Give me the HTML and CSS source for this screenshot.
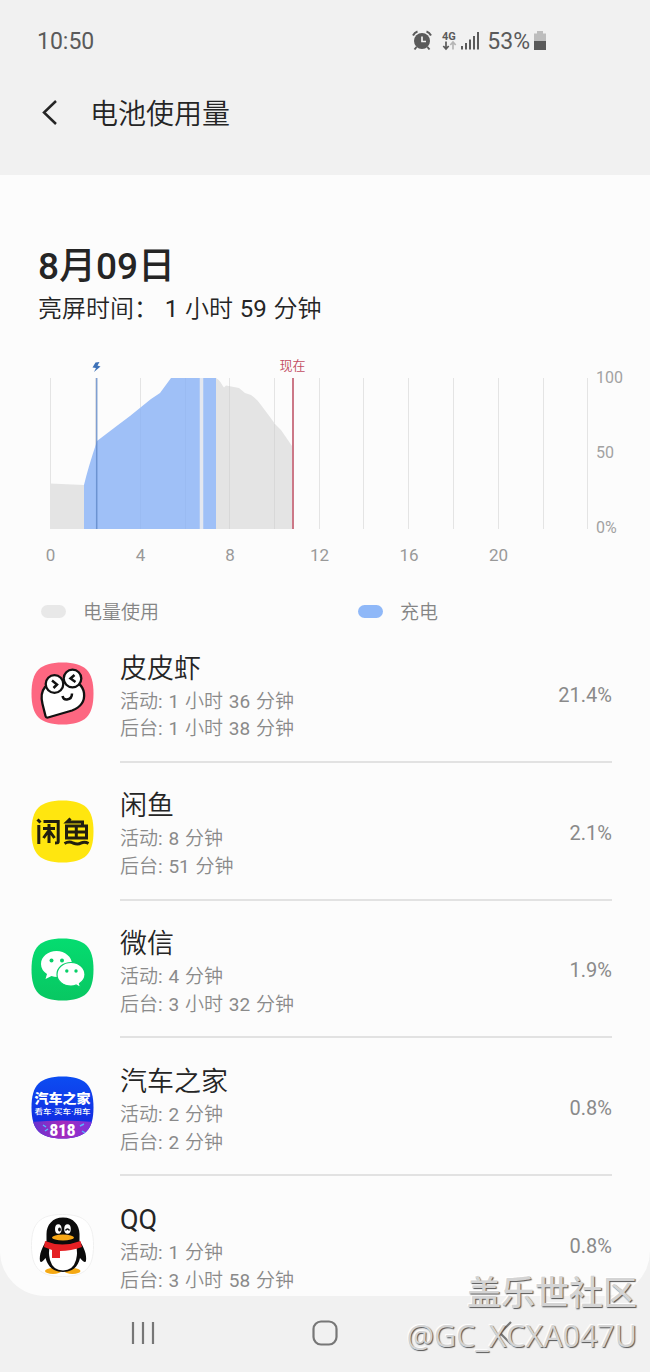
FILE: index.html
```html
<!DOCTYPE html>
<html lang="zh-CN">
<head>
<meta charset="utf-8">
<title>电池使用量</title>
<link rel="stylesheet" href="styles.css">
</head>
<body>
<div class="phone">
	<div class="status">
		<span class="time">10:50</span>
		<svg class="status-icons" width="70" height="26" viewBox="0 0 70 26">
			<!-- alarm -->
			<g fill="none" stroke="#5a5a5a">
				<circle cx="11" cy="13" r="8" fill="#5a5a5a" stroke="none"/>
				<path d="M2 7.5Q3.500 4.500 6.500 3.500M20 7.500Q18.500 4.500 15.500 3.500M5.500 19L3.500 21.500M16.500 19L18.500 21.500" stroke-width="2"/>
				<path d="M11 8.500V13.500H15" stroke="#f1f1f1" stroke-width="1.700"/>
			</g>
			<text x="31" y="11.500" class="net">4G</text>
			<path d="M35 13.500V20M32.300 18L35 21L37.700 18" fill="none" stroke="#5a5a5a" stroke-width="1.700"/>
			<path d="M42 21.500V15M39.300 17L42 14L44.700 17" fill="none" stroke="#b5b5b5" stroke-width="1.700"/>
			<path d="M51 21.500V18M55 21.500V15M59 21.500V11.500M63 21.500V8M67 21.500V4" stroke="#5a5a5a" stroke-width="2"/>
		</svg>
		<span class="level">53%</span>
		<svg width="14" height="22" viewBox="0 0 14 22">
			<path d="M4 1H10V3.500H13V11H1V3.500H4Z" fill="#bdbdbd"/>
			<path d="M1 11H13V20H1Z" fill="#5a5a5a"/>
		</svg>
	</div>

	<div class="header">
		<svg class="back" width="18" height="28" viewBox="0 0 18 28"><path d="M16 2L4 13.500L16 25" fill="none" stroke="#252525" stroke-width="2.500"/></svg>
		<h1>电池使用量</h1>
	</div>

	<div class="card">
		<div class="summary">
			<h2>8月09日</h2>
			<p>亮屏时间： 1 小时 59 分钟</p>
		</div>

		<svg class="chart" width="650" height="230" viewBox="0 350 650 230">
			<path class="grid" d="M50.500 378V529M95.500 378V529M140.500 378V529M185.500 378V529M229.500 378V529M274.500 378V529M319.500 378V529M363.500 378V529M408.500 378V529M453.500 378V529M498.500 378V529M543.500 378V529M587.500 378V529"/>
			<path class="used" d="M50 483.500L84 485V529H50Z"/>
			<path class="used" d="M216 378C220 380 222 385 224 387.500L226 385.500L239 388L245 393L251 395Q257 399 261 405L270 417L275 424L281 430L292 446V529H216Z"/>
			<path class="charge" d="M84 485Q88 468 97 441L118 425L130 416L151 399L160 393L171 378H216V529H84Z"/>
			<path class="gap" d="M201.500 378V529"/>
			<path class="inner" d="M140.500 409V529M185.500 378V529"/>
			<path class="inner-gray" d="M229.500 386V529M274.500 424V529"/>
			<path class="plug" d="M96.700 378V529"/>
			<path class="now" d="M293 378V529"/>
			<path d="M95.500 362.500L92.500 367.500L96 368L94 372L100.500 366.500L97.500 365.500L99.500 362Z" fill="#3e72b8"/>
			<text class="now-text" x="292.500" y="369.500">现在</text>
			<g class="hours">
				<text x="50.500" y="561">0</text>
				<text x="140.500" y="561">4</text>
				<text x="230" y="561">8</text>
				<text x="319.500" y="561">12</text>
				<text x="409" y="561">16</text>
				<text x="498.500" y="561">20</text>
			</g>
			<g class="scale">
				<text x="596" y="383">100</text>
				<text x="596" y="458">50</text>
				<text x="596" y="533">0%</text>
			</g>
		</svg>

		<div class="legend">
			<div class="key"><i></i><span>电量使用</span></div>
			<div class="key charging"><i></i><span>充电</span></div>
		</div>

		<ul class="apps">
			<li>
				<svg class="icon" viewBox="0 0 63 63">
					<path d="M31.500 .5C54 .5 62.500 9 62.500 31.500S54 62.500 31.500 62.500.5 54 .5 31.500 9 .5 31.500 .5Z" fill="#fd6781"/>
					<g fill="#fff" stroke="#111" stroke-width="2.300">
						<path d="M14 25C10 30 10 36 11.500 42L14.500 54Q15 56 17 55.500L41 48.500C50 45 54 39 53 31Q52 25 48 22L30 20Z"/>
						<circle cx="23.500" cy="22" r="8.800"/>
						<circle cx="41.500" cy="16.500" r="8.800"/>
						<path d="M21 18.500L26 22.500L22.500 26M43.500 13L39.500 16.500L44.500 20M31.500 34Q32.500 38 36 37.500Q41 37 41 31.500" fill="none" stroke-width="2.500"/>
					</g>
				</svg>
				<div class="info">
					<div class="text"><h3>皮皮虾</h3><p>活动: 1 小时 36 分钟</p><p>后台: 1 小时 38 分钟</p></div>
					<span class="percent">21.4%</span>
				</div>
			</li>
			<li>
				<svg class="icon" viewBox="0 0 63 63">
					<path d="M31.500 .5C54 .5 62.500 9 62.500 31.500S54 62.500 31.500 62.500.5 54 .5 31.500 9 .5 31.500 .5Z" fill="#ffe60f"/>
					<g fill="none" stroke="#221f10" stroke-width="3">
						<path d="M7.800 25V44M6.500 19.500L9.500 22.500M12.500 21.500H27.200V42Q27.200 43 24 43M12 28.500H24M18 24V43M17.500 31L12.500 38M18.500 31L23.500 38"/>
						<path d="M39.500 18.500L36 22H51.500V26M35.500 26V38H55.500V26H34M36 32H55M45.300 26V38M33.500 43.500Q38 41 42 43Q47 45 50 43Q54 41.500 57.500 43.500"/>
					</g>
				</svg>
				<div class="info">
					<div class="text"><h3>闲鱼</h3><p>活动: 8 分钟</p><p>后台: 51 分钟</p></div>
					<span class="percent">2.1%</span>
				</div>
			</li>
			<li>
				<svg class="icon" viewBox="0 0 63 63">
					<defs><linearGradient id="wx" x1="0" y1="0" x2="0" y2="1"><stop offset="0" stop-color="#05dc70"/><stop offset="1" stop-color="#08c762"/></linearGradient></defs>
					<path d="M31.500 .5C54 .5 62.500 9 62.500 31.500S54 62.500 31.500 62.500.5 54 .5 31.500 9 .5 31.500 .5Z" fill="url(#wx)"/>
					<path d="M25.500 13C17 13 10 18.600 10 26Q10 32 16 36L14.500 41L20.500 38Q23 39 26.500 39C35 39 41 33 41 26S34 13 25.500 13Z" fill="#fff"/>
					<path d="M40 24.500C32 24.500 26 30 26 36.500S32 48 40 48Q43 48 45 47L49.500 49.500L48.500 45.500Q54 42 54 36.500C54 30 48 24.500 40 24.500Z" fill="#fff" stroke="#08cf68" stroke-width="1.200"/>
					<g fill="#08cf68"><circle cx="20.500" cy="22.500" r="2"/><circle cx="31" cy="22.500" r="2"/><circle cx="35.800" cy="33" r="1.700"/><circle cx="45" cy="33" r="1.700"/></g>
				</svg>
				<div class="info">
					<div class="text"><h3>微信</h3><p>活动: 4 分钟</p><p>后台: 3 小时 32 分钟</p></div>
					<span class="percent">1.9%</span>
				</div>
			</li>
			<li>
				<svg class="icon" viewBox="0 0 63 63">
					<defs>
						<linearGradient id="car" x1="0" y1="0" x2="1" y2="0"><stop offset="0" stop-color="#6434d0"/><stop offset=".5" stop-color="#a52bbd"/><stop offset="1" stop-color="#7932dd"/></linearGradient>
						<linearGradient id="blue" x1="0" y1="0" x2="0" y2="1"><stop offset="0" stop-color="#0c4df2"/><stop offset="1" stop-color="#1422db"/></linearGradient>
						<clipPath id="tile"><path d="M31.500 .5C54 .5 62.500 9 62.500 31.500S54 62.500 31.500 62.500.5 54 .5 31.500 9 .5 31.500 .5Z"/></clipPath>
					</defs>
					<g clip-path="url(#tile)">
						<path d="M0 0H63V63H0Z" fill="url(#blue)"/>
						<path d="M0 46Q31 43 63 46V63H0Z" fill="url(#car)"/>
						<path d="M12 49L15 51M14 55L17 53M49 50L53 48M51 55L54 57" stroke="#55b5ff" stroke-width="1.500"/>
					</g>
					<text class="car-name" x="31.500" y="26.500" textLength="56" lengthAdjust="spacingAndGlyphs">汽车之家</text>
					<text class="car-sub" x="31.500" y="37.500" textLength="56" lengthAdjust="spacingAndGlyphs">看车·买车·用车</text>
					<text class="car-num" x="31.500" y="60" textLength="26" lengthAdjust="spacingAndGlyphs">818</text>
				</svg>
				<div class="info">
					<div class="text"><h3>汽车之家</h3><p>活动: 2 分钟</p><p>后台: 2 分钟</p></div>
					<span class="percent">0.8%</span>
				</div>
			</li>
			<li>
				<svg class="icon" viewBox="0 0 63 63">
					<path d="M31.500 .5C54 .5 62.500 9 62.500 31.500S54 62.500 31.500 62.500.5 54 .5 31.500 9 .5 31.500 .5Z" fill="#fff" stroke="#f0f0f0"/>
					<ellipse cx="22" cy="57" rx="8" ry="3" fill="#f5a914"/>
					<ellipse cx="41.500" cy="57" rx="8" ry="3" fill="#f5a914"/>
					<path d="M32 3.500C21.500 3.500 15.500 11 15.500 20V27C11 33 8 41 9 47Q10 50 14.500 44C17 53 23 58 32 58S47 53 49 44Q54 50 55 47C56 41 53 33 48.500 27V20C48.500 11 42.500 3.500 32 3.500Z" fill="#0b0b0b"/>
					<path d="M19 32H45Q47 38 45 46Q42 56.500 32 56.500T19 46Q17 38 19 32Z" fill="#fff"/>
					<ellipse cx="27.300" cy="15" rx="3.300" ry="4.700" fill="#fff"/><ellipse cx="36.500" cy="15" rx="3.300" ry="4.700" fill="#fff"/>
					<ellipse cx="28.500" cy="15.500" rx="1.400" ry="2" fill="#111"/>
					<path d="M34.500 16.500Q36.500 13.500 38.500 16.500" fill="none" stroke="#111" stroke-width="1.500"/>
					<ellipse cx="32" cy="23.500" rx="11" ry="3" fill="#f8a817"/>
					<path d="M14 27Q31 34 49.500 27L51 33Q40 37 29 37V44H21V36L13 33Z" fill="#e52024"/>
				</svg>
				<div class="info">
					<div class="text"><h3>QQ</h3><p>活动: 1 分钟</p><p>后台: 3 小时 58 分钟</p></div>
					<span class="percent">0.8%</span>
				</div>
			</li>
		</ul>
	</div>

	<div class="nav">
		<svg width="26" height="26" viewBox="0 0 26 26"><path d="M3 2V24M13 2V24M23 2V24" stroke="#777" stroke-width="2.200"/></svg>
		<svg width="28" height="28" viewBox="0 0 28 28"><rect x="2.500" y="2.500" width="23" height="23" rx="7.500" fill="none" stroke="#777" stroke-width="2.200"/></svg>
		<svg width="22" height="26" viewBox="0 0 22 26"><path d="M18 2L7 13L18 24" fill="none" stroke="#777" stroke-width="2.200"/></svg>
	</div>

	<div class="watermark">
		<div class="site">盖乐世社区</div>
		<div class="user">@GC_XCXA047U</div>
	</div>
</div>
</body>
</html>
```
FILE: styles.css
```css
html,body{margin:0;padding:0;}
h1,h2,h3,p,ul,li{margin:0;padding:0;list-style:none;font-weight:400;}
body{background:#f1f1f1;font-family:Roboto,"Noto Sans CJK SC DemiLight","Noto Sans CJK SC",sans-serif;color:#252525;}
svg{display:block;flex:none;}
.phone{position:relative;width:650px;height:1372px;overflow:hidden;}

.status{display:flex;align-items:center;height:82px;padding:0 103px 0 37px;box-sizing:border-box;color:#5a5a5a;font-size:23px;}
.status .time{flex:1;}
.status-icons{margin-right:6px;}
.status .level{margin-right:3px;}
.net{font:bold 11px Roboto,sans-serif;fill:#5a5a5a;}

.header{display:flex;align-items:center;height:93px;padding:0 0 31px 40px;box-sizing:border-box;}
.header h1{margin-left:32px;padding-top:4px;font-size:28px;line-height:40px;}

.card{height:1121px;overflow:hidden;background:#fcfcfc;border-radius:0 0 45px 45px;}
.summary{height:175px;padding:69px 0 0 38px;box-sizing:border-box;}
.summary h2{font-family:Roboto,"Noto Sans CJK SC",sans-serif;font-size:37px;line-height:46px;font-weight:500;}
.summary p{font-size:24px;line-height:39px;word-spacing:.8px;}

.grid{stroke:#e4e4e4;}
.used{fill:#e4e4e4;}
.charge{fill:#9fc0f7;}
.gap{stroke:#e3e7f0;stroke-width:3.500;}
.inner{stroke:#98b9f0;opacity:.6;}
.inner-gray{stroke:#d8d8d8;}
.plug{stroke:#6088c8;stroke-width:1.500;opacity:.8;}
.now{stroke:#bd4c60;stroke-width:1.500;}
.now-text{font-size:13px;fill:#c24c62;text-anchor:middle;}
.hours text{font-size:17px;fill:#999;text-anchor:middle;}
.scale text{font-size:16px;fill:#a2a2a2;}

.legend{display:flex;height:45px;padding:9px 0 0 41px;box-sizing:border-box;color:#858585;font-size:19px;line-height:28px;}
.key{display:flex;flex:none;align-items:center;width:317px;height:44px;}
.key i{width:25px;height:13px;margin-right:17px;border-radius:7px;background:#e8e8e8;}
.key span{padding-top:4px;}
.charging i{background:#8fb8f8;}

.apps li{display:flex;align-items:center;height:137.8px;padding:0 38px 0 31px;}
.icon{width:63px;height:63px;}
.info{display:flex;flex:1;align-items:center;height:100%;margin-left:26px;box-sizing:border-box;border-bottom:2px solid #e2e2e2;}
.text{flex:1;padding-top:7px;}
.text h3{font-size:27px;line-height:38px;}
.text p{font-size:19px;line-height:27.700px;word-spacing:1.100px;color:#8a8a8a;}
.percent{padding-top:4px;font-size:20px;color:#8a8a8a;}
.car-name{font:900 13px "Noto Sans CJK SC",sans-serif;fill:#fff;text-anchor:middle;}
.car-sub{font:500 7px Roboto,"Noto Sans CJK SC",sans-serif;fill:#fff;text-anchor:middle;}
.car-num{font:900 16px Roboto,sans-serif;fill:#fff;text-anchor:middle;}

.nav{display:flex;align-items:center;justify-content:space-between;height:73px;padding:0 135px 0 130px;}

/* lies over the card and the nav bar */
.watermark{position:absolute;right:13px;bottom:15px;text-align:right;color:#d4d4d4;text-shadow:1px 1px 1px #555,-1px -1px 1px #fff;}
.watermark .site{font-family:"Noto Sans CJK SC",sans-serif;font-size:34px;line-height:44px;font-weight:500;}
.watermark .user{font-family:"Open Sans",sans-serif;font-size:30.500px;line-height:44px;}
```
